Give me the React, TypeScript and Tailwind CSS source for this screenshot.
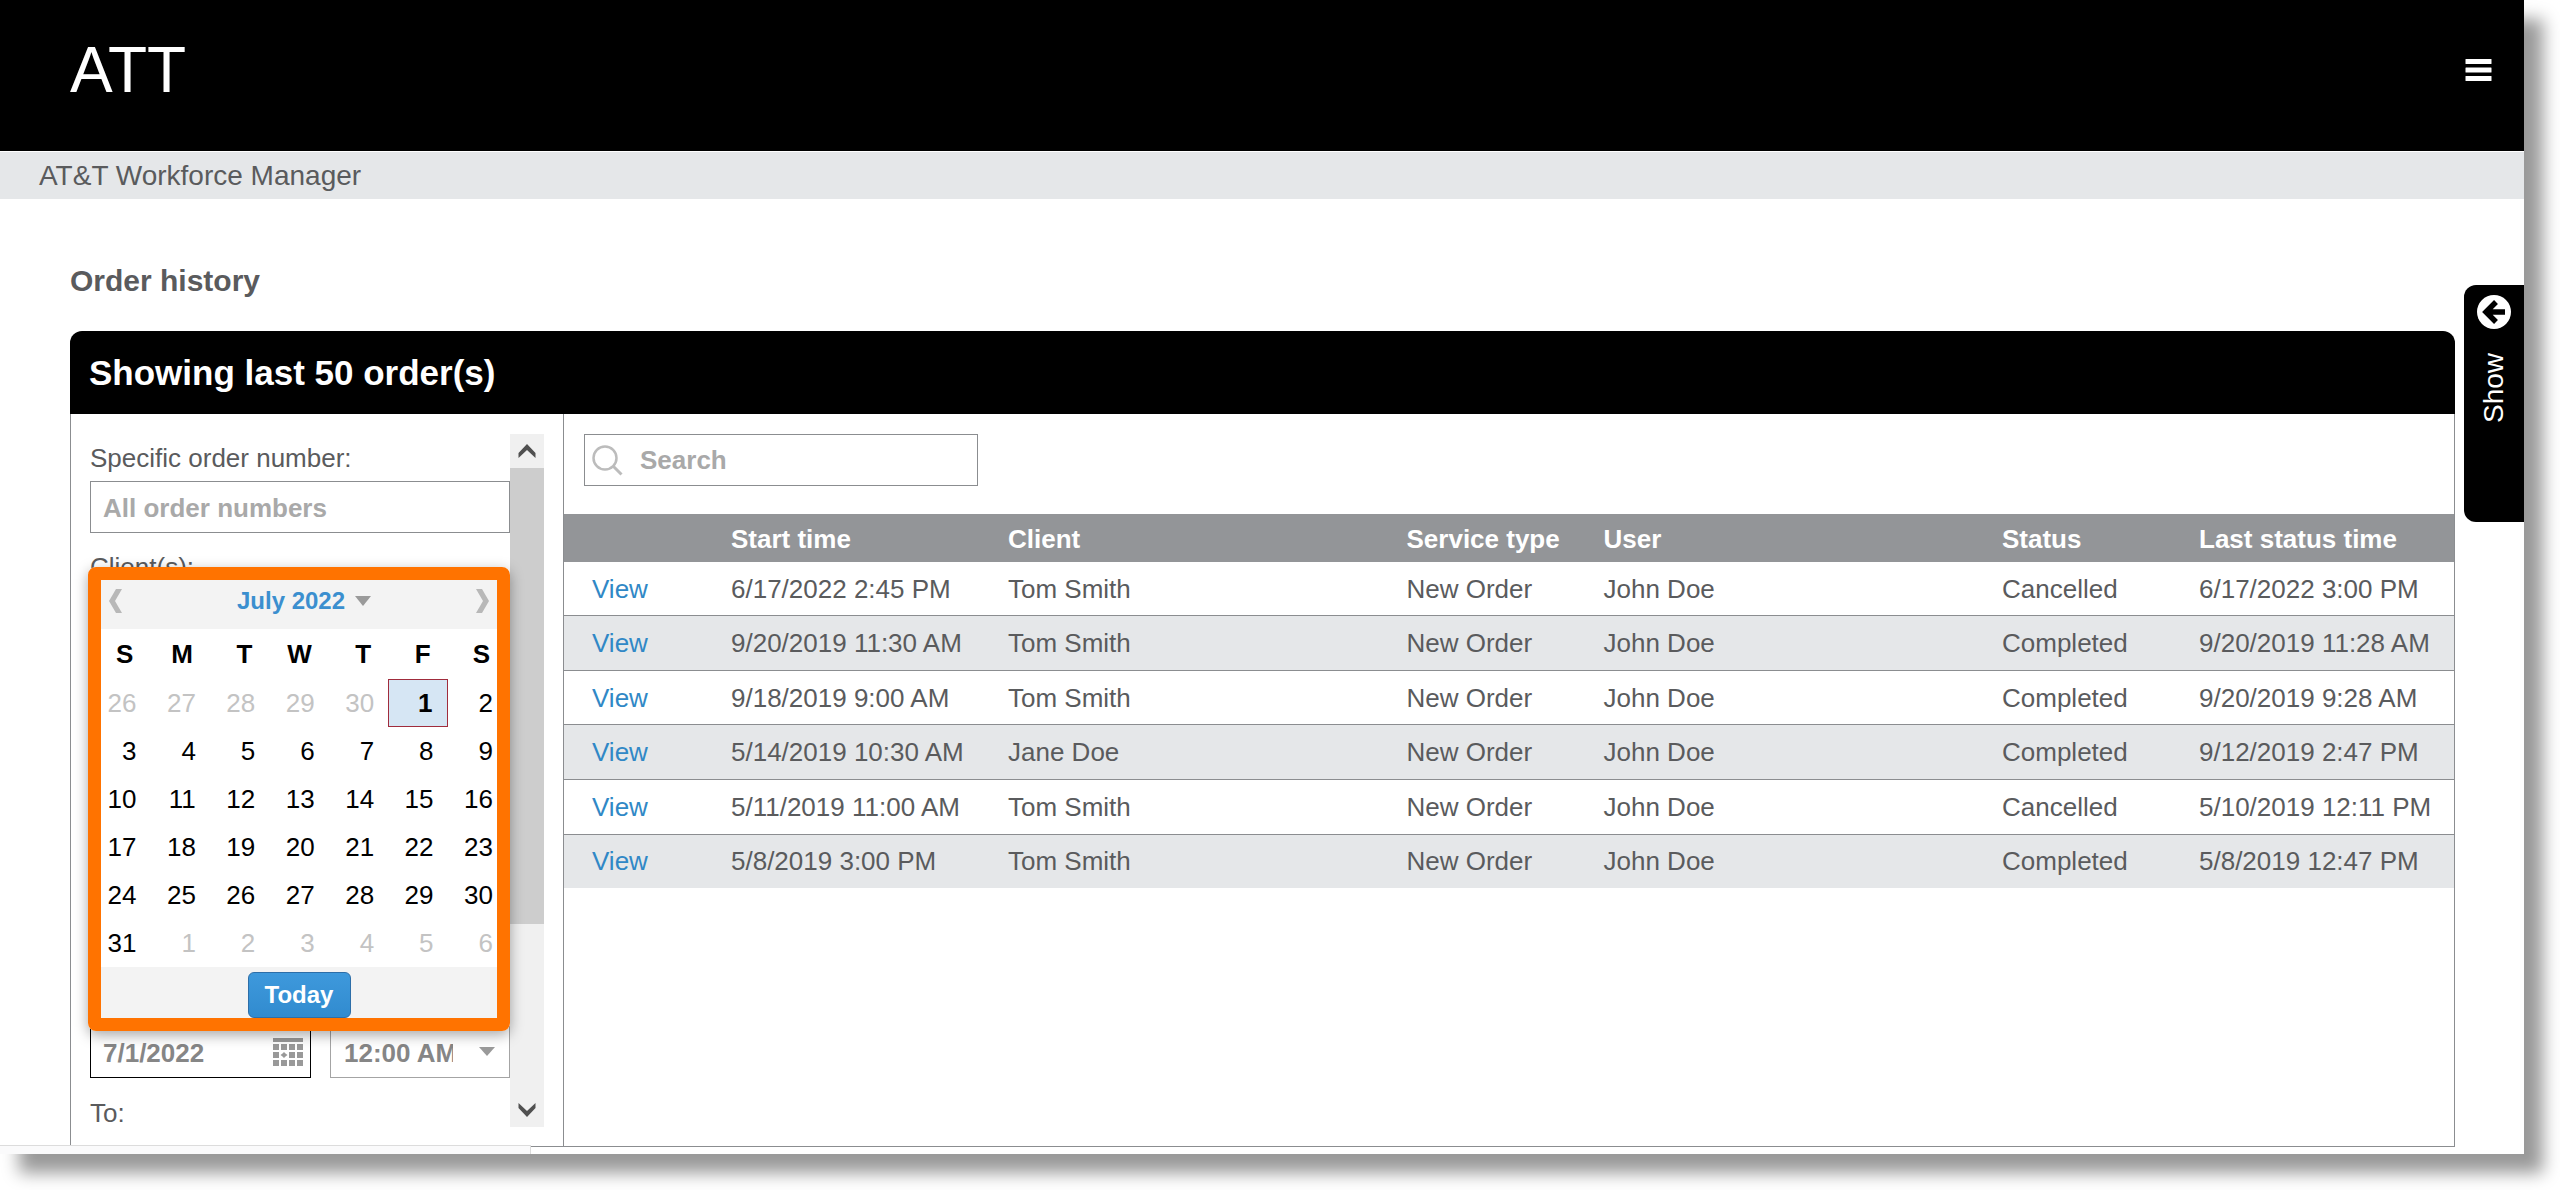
import { useState } from "react";

type Order = {
  start: string;
  client: string;
  service: string;
  user: string;
  status: string;
  last: string;
};

const orders: Order[] = [
  { start: "6/17/2022 2:45 PM", client: "Tom Smith", service: "New Order", user: "John Doe", status: "Cancelled", last: "6/17/2022 3:00 PM" },
  { start: "9/20/2019 11:30 AM", client: "Tom Smith", service: "New Order", user: "John Doe", status: "Completed", last: "9/20/2019 11:28 AM" },
  { start: "9/18/2019 9:00 AM", client: "Tom Smith", service: "New Order", user: "John Doe", status: "Completed", last: "9/20/2019 9:28 AM" },
  { start: "5/14/2019 10:30 AM", client: "Jane Doe", service: "New Order", user: "John Doe", status: "Completed", last: "9/12/2019 2:47 PM" },
  { start: "5/11/2019 11:00 AM", client: "Tom Smith", service: "New Order", user: "John Doe", status: "Cancelled", last: "5/10/2019 12:11 PM" },
  { start: "5/8/2019 3:00 PM", client: "Tom Smith", service: "New Order", user: "John Doe", status: "Completed", last: "5/8/2019 12:47 PM" },
];

const weekdays = ["S", "M", "T", "W", "T", "F", "S"];

// six weeks starting on Sunday, June 26
const weeks = Array.from({ length: 6 }, (_, w) =>
  Array.from({ length: 7 }, (_, d) => {
    const date = new Date(2022, 5, 26 + w * 7 + d);
    return { day: date.getDate(), current: date.getMonth() === 6 };
  })
);

function CalendarIcon() {
  return (
    <svg width="30" height="29" viewBox="0 0 30 29" fill="#999" aria-hidden="true">
      <rect x="0" y="0" width="30" height="4" />
      {[0, 1, 2].map((r) =>
        [0, 1, 2, 3].map((c) =>
          r === 1 && c === 1 ? (
            <path key="mid" d="M11 14l1.500 1.500L14.500 17l-2 1.500L11 20l-1.500-1.500L7.500 17l2-1.500z" />
          ) : (
            <rect key={`${r}-${c}`} x={c * 8} y={6 + r * 8} width="6" height="6" />
          )
        )
      )}
    </svg>
  );
}

function DatePicker({ onToday }: { onToday: () => void }) {
  return (
    <div className="absolute top-[133px] -left-[2px] w-[422px] h-[464px] px-[3px] py-[13px] bg-white rounded-lg shadow-[0_4px_14px_rgba(0,0,0,0.35)]">
      <div className="flex items-start justify-between h-[49px] px-[18px] pt-[7px] bg-[#f3f3f3]">
        <button aria-label="Previous month" className="pt-[2px]">
          <svg width="13" height="24" viewBox="0 0 13 24" fill="#b8b8b8">
            <path d="M7 0h6L6 12l7 12H7L0 12z" />
          </svg>
        </button>
        <button className="flex items-center gap-[10px] ml-[10px] text-2xl leading-7 font-bold text-[#3b8fcf]">
          July 2022
          <svg width="16" height="10" viewBox="0 0 16 10" fill="#9a9a9a">
            <path d="M0 0h16L8 10z" />
          </svg>
        </button>
        <button aria-label="Next month" className="pt-[2px]">
          <svg width="13" height="24" viewBox="0 0 13 24" fill="#b8b8b8">
            <path d="M6 0H0l7 12-7 12h6l7-12z" />
          </svg>
        </button>
      </div>
      <table className="w-full table-fixed border-collapse text-[26px] leading-[30px] text-black">
        <thead>
          <tr className="h-[50px]">
            {weekdays.map((d, i) => (
              <th key={i} scope="col" className="pr-[17px] text-right font-bold">{d}</th>
            ))}
          </tr>
        </thead>
        <tbody>
          {weeks.map((week, w) => (
            <tr key={w} className="h-12">
              {week.map(({ day, current }, d) =>
                current && day === 1 ? (
                  <td key={d} className="p-0">
                    <div className="flex h-12 items-center justify-end border border-[#a02c3c] bg-[#d6e6f4] pr-[14px] font-bold">
                      {day}
                    </div>
                  </td>
                ) : (
                  <td key={d} className={`p-0 pr-[14px] text-right ${current ? "" : "text-[#c3c3c3]"}`}>{day}</td>
                )
              )}
            </tr>
          ))}
        </tbody>
      </table>
      <div className="flex h-[51px] justify-center bg-[#f3f3f3] pt-[5px]">
        <button
          onClick={onToday}
          className="h-[46px] w-[103px] rounded-md border border-[#2d6ea8] bg-linear-to-b from-[#3e99dc] to-[#318bcf] text-2xl font-bold text-white"
        >
          Today
        </button>
      </div>
      <div className="pointer-events-none absolute inset-0 rounded-lg border-[13px] border-[#ff7300]" />
    </div>
  );
}

function ScrollBar() {
  return (
    <div className="flex w-[34px] flex-col bg-[#f0f0f0]">
      <button aria-label="Scroll up" className="flex h-[34px] items-center justify-center">
        <svg width="18" height="14" viewBox="0 0 18 14" fill="#505050">
          <path d="M9 0l8.500 9v5L9 6 .5 14V9z" />
        </svg>
      </button>
      <div className="h-[456px] bg-[#cdcdcd]" />
      <button aria-label="Scroll down" className="mt-auto flex h-[34px] items-center justify-center">
        <svg width="18" height="14" viewBox="0 0 18 14" fill="#505050">
          <path d="M9 14l8.500-9V0L9 8 .5 0v5z" />
        </svg>
      </button>
    </div>
  );
}

function Filters() {
  const [date, setDate] = useState("7/1/2022");

  return (
    <div className="flex w-[493px] shrink-0 border-r border-[#8b8d90] pt-5 pb-[19px] pl-[19px]">
      <div className="relative flex h-[693px] w-[420px] flex-col">
        <label htmlFor="order-number" className="flex h-[47px] items-center">Specific order number:</label>
        <input
          id="order-number"
          placeholder="All order numbers"
          className="h-[52px] border border-[#8b8d90] px-3 pt-[2px] font-bold placeholder:text-[#a9a9a9] outline-none"
        />
        <span className="flex h-[68px] items-center">Client(s):</span>
        <div className="mt-auto flex justify-between font-bold text-[#868686]">
          <div className="flex h-[52px] w-[221px] items-center justify-between border border-black pr-[7px] pl-3">
            <input
              aria-label="From date"
              value={date}
              onChange={(e) => setDate(e.target.value)}
              className="w-[150px] pt-[2px] outline-none"
            />
            <button aria-label="Open calendar"><CalendarIcon /></button>
          </div>
          <div className="relative">
            <select
              aria-label="From time"
              className="h-[52px] w-[180px] appearance-none border border-[#a4a4a4] pt-[2px] pr-[56px] pl-[13px] outline-none"
            >
              <option>12:00 AM</option>
            </select>
            <svg className="pointer-events-none absolute top-[21px] right-[15px]" width="16" height="9" viewBox="0 0 16 9" fill="#9a9a9a">
              <path d="M0 0h16L8 9z" />
            </svg>
          </div>
        </div>
        <span className="flex h-[49px] items-center pt-5">To:</span>
        <DatePicker onToday={() => setDate("7/1/2022")} />
      </div>
      <ScrollBar />
    </div>
  );
}

function OrderTable() {
  return (
    <table className="h-[374px] w-full table-fixed border-collapse text-left">
      <thead>
        <tr className="h-12 bg-[#939598] text-white">
          <th className="w-[167px]" aria-label="Actions" />
          <th scope="col" className="w-[277px] pt-[2px]">Start time</th>
          <th scope="col" className="pt-[2px]">Client</th>
          <th scope="col" className="w-[197px] pt-[2px]">Service type</th>
          <th scope="col" className="pt-[2px]">User</th>
          <th scope="col" className="w-[197px] pt-[2px]">Status</th>
          <th scope="col" className="w-[255px] pt-[2px]">Last status time</th>
        </tr>
      </thead>
      <tbody>
        {orders.map((o) => (
          <tr key={o.start} className="border-b border-[#8b8d90] last:border-b-0 even:bg-[#e5e7e9]">
            <td className="pl-7"><a href="#" className="text-[#3088c6]">View</a></td>
            <td>{o.start}</td>
            <td>{o.client}</td>
            <td>{o.service}</td>
            <td>{o.user}</td>
            <td>{o.status}</td>
            <td>{o.last}</td>
          </tr>
        ))}
      </tbody>
    </table>
  );
}

export default function App() {
  return (
    <div className="overflow-hidden bg-white pr-9 pb-9 font-['Liberation_Sans',Arial,sans-serif] text-[26px] leading-[30px] text-[#5a5b5d]">
      <div className="relative bg-white pb-[7px] shadow-[19px_19px_16px_rgba(0,0,0,0.4)]">
        <header className="flex h-[151px] items-start justify-between bg-black pr-8 pl-[70px] text-white">
          <h1 className="pt-[33px] text-[64px] leading-[74px]">ATT</h1>
          <button aria-label="Menu" className="pt-[59px]">
            <svg width="27" height="22" viewBox="0 0 27 22" fill="#fff">
              <rect x="0.500" y="0" width="26" height="5" rx="0.500" />
              <rect x="0.500" y="8.500" width="26" height="5" rx="0.500" />
              <rect x="0.500" y="17" width="26" height="5" rx="0.500" />
            </svg>
          </button>
        </header>
        <div className="mt-px flex h-[47px] items-center bg-[#e5e7e9] pl-[39px] text-[28px]">
          AT&amp;T Workforce Manager
        </div>
        <main className="pt-16 pr-[69px] pl-[70px]">
          <h2 className="text-[30px] leading-9 font-bold">Order history</h2>
          <section className="mt-8 overflow-hidden rounded-t-xl">
            <h3 className="flex h-[83px] items-center bg-black pl-[19px] text-[35px] font-bold text-white">
              Showing last 50 order(s)
            </h3>
            <div className="flex border border-t-0 border-[#8b8d90]">
              <Filters />
              <div className="min-w-0 flex-1">
                <div className="px-5 pt-5 pb-[28px]">
                  <div className="flex h-[52px] w-[394px] items-center gap-[17px] border border-[#8b8d90] pl-[7px]">
                    <svg width="31" height="31" viewBox="0 0 31 31" fill="none" stroke="#bcbcbc" strokeWidth="2.500">
                      <circle cx="13" cy="13" r="11.500" />
                      <path d="M21.500 21.500l8 8" strokeWidth="3" />
                    </svg>
                    <input
                      aria-label="Search"
                      placeholder="Search"
                      className="min-w-0 flex-1 font-bold placeholder:text-[#a9a9a9] outline-none"
                    />
                  </div>
                </div>
                <OrderTable />
              </div>
            </div>
          </section>
        </main>
        <button className="absolute top-[285px] right-0 flex h-[237px] w-[60px] flex-col items-center gap-[24px] rounded-l-xl bg-black pt-[10px] text-white">
          <svg width="34" height="34" viewBox="0 0 34 34" fill="none">
            <circle cx="17" cy="17" r="17" fill="#fff" />
            <path d="M28 17H10M19 7L9 17l10 10" stroke="#000" strokeWidth="5.500" />
          </svg>
          <span className="rotate-180 text-[28px] [writing-mode:vertical-rl]">Show</span>
        </button>
        {/* browser status bubble, empty */}
        <div className="absolute bottom-0 left-0 h-[9px] w-[531px] border-t border-r border-[#dcdcdc] bg-[#fafafb]" />
      </div>
    </div>
  );
}
